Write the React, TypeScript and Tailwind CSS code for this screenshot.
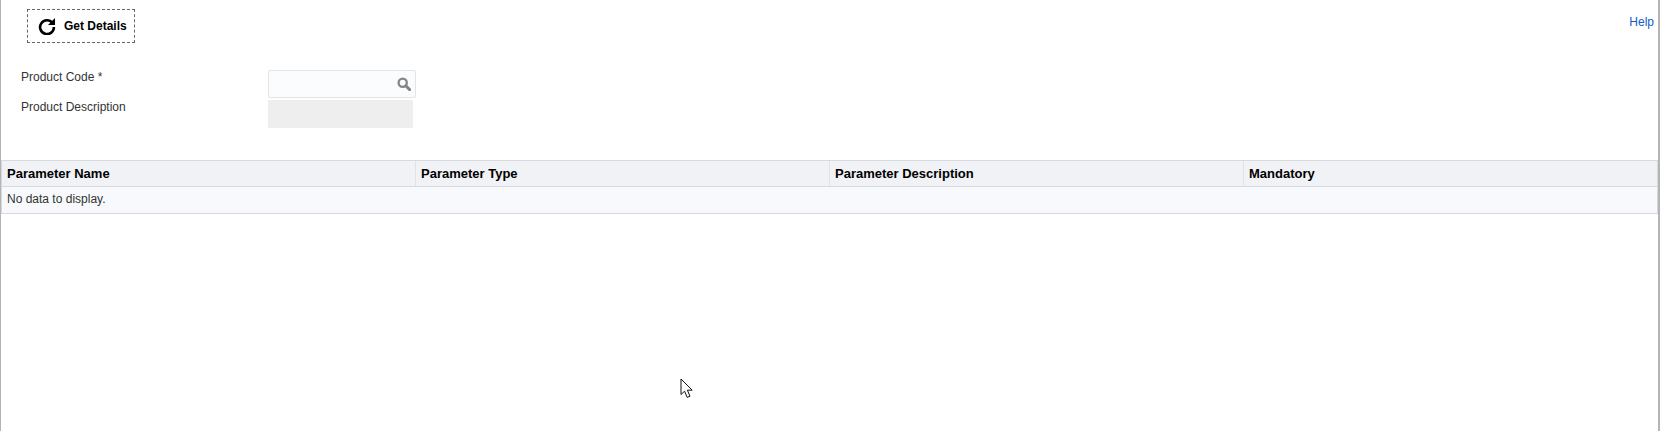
import React from "react";

const columns = ["Parameter Name", "Parameter Type", "Parameter Description", "Mandatory"];

export default function App() {
  return (
    <div className="relative h-[431px] w-[1660px] overflow-hidden border-l border-r-2 border-[#b4b4b4] bg-white font-['Liberation_Sans',Arial,sans-serif] text-[12px] text-[#333]">
      <div className="flex items-start justify-between pl-[26px] pr-[4px] pt-[9px]">
        <button className="flex h-[34px] w-[108px] items-center border border-dashed border-[#666] pl-[10px] text-[12px] font-bold text-black">
          <svg width="18" height="18" viewBox="0 0 18 18" fill="none" className="mr-[8px]">
            <path d="M14.4 5.9A6.9 6.9 0 1 0 15.9 10" stroke="#000" strokeWidth="2.6" fill="none" />
            <path d="M17 1V8H10Z" fill="#000" />
          </svg>
          Get Details
        </button>
        <a className="mt-[4px] text-[12px] text-[#145cc4]">Help</a>
      </div>

      <div className="ml-[20px] mt-[27px] grid grid-cols-[247px_auto] justify-start">
        <div className="h-[28px] leading-[14px]">Product Code *</div>
        <div className="flex h-[28px] w-[148px] items-center justify-end rounded-[2px] border border-[#e3e4e6] bg-[#fbfcfe] pr-[4px]">
          <svg width="14" height="14" viewBox="0 0 14 14" fill="none">
            <circle cx="5.7" cy="5.7" r="4.1" stroke="#858585" strokeWidth="2.3" />
            <path d="M8.8 8.8L12.6 12.6" stroke="#858585" strokeWidth="3" strokeLinecap="round" />
          </svg>
        </div>
        <div className="pt-[2px] leading-[14px]">Product Description</div>
        <div className="mt-[2px] h-[28px] w-[145px] bg-[#eeeeef]" />
      </div>

      <div className="mt-[32px] border border-[#d6dadf]">
        <div className="grid h-[26px] grid-cols-[414px_414px_414px_1fr] border-b border-[#d6dadf] bg-[#f0f2f5] text-[13px] font-bold text-black">
          {columns.map((c, i) => (
            <div key={c} className={`flex items-center pl-[5px] ${i < 3 ? "border-r border-[#dfe2e6]" : ""}`}>
              {c}
            </div>
          ))}
        </div>
        <div className="flex h-[26px] items-center bg-[#f7f9fc] pb-[2px] pl-[5px] text-[12px]">No data to display.</div>
      </div>

      <svg width="14" height="22" viewBox="0 0 14 22" className="absolute left-[679px] top-[378px]">
        <path d="M1 1V16.5L4.6 13.2L7.2 19.4L10 18.2L7.4 12.2H12.2Z" fill="#fff" stroke="#111" strokeWidth="1" strokeLinejoin="miter" />
      </svg>
    </div>
  );
}
